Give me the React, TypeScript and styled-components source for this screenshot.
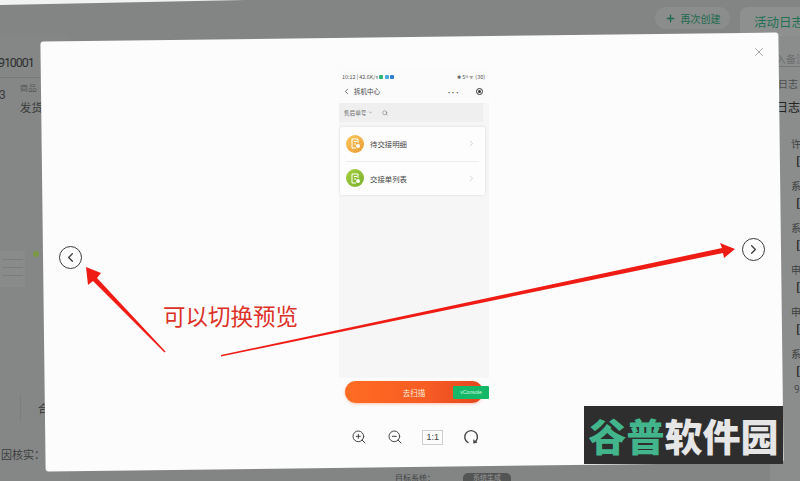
import React from "react";
import styled, { createGlobalStyle } from "styled-components";
import { ZoomIn, ZoomOut, ChevronLeft, ChevronRight, ChevronDown, Search, X, Plus } from "lucide-react";

const Global = createGlobalStyle`
  html, body { margin: 0; padding: 0; background: #838585; }
  body { font-family: "Noto Sans CJK SC", "Liberation Sans", sans-serif; }
`;

const Page = styled.div`
  position: relative; width: 800px; height: 481px; overflow: hidden;
  background: #838585; display: flex; flex-direction: column;
`;
const PaperCorner = styled.div`
  position: absolute; left: 0; top: 0; width: 245px; height: 5px;
  background: #f1f2f2; clip-path: polygon(0 0, 100% 0, 0 100%);
`;
const TopBar = styled.header`
  height: 36px; flex: none; display: flex; justify-content: flex-end; align-items: flex-start;
  gap: 10px; padding-top: 7px; box-sizing: border-box;
`;
const Pill = styled.div`
  width: 75px; height: 22px; border-radius: 11px; background: #8b8d8c; color: #1e6a4e;
  display: flex; align-items: center; justify-content: center; gap: 5px; font-size: 10px;
`;
const Tab = styled.div`
  width: 60px; height: 36px; border-radius: 8px 0 0 0; background: #8e908f; color: #1f7054;
  font-size: 12.5px; line-height: 1; padding: 9px 0 0 14px; box-sizing: border-box; white-space: nowrap; overflow: hidden;
`;
const Body = styled.main`
  flex: 1; display: flex; justify-content: space-between; min-height: 0;
`;
const LeftCol = styled.section`
  width: 70px; display: flex; flex-direction: column; background: #858787;
`;
const OrderRow = styled.div`
  height: 27px; margin-top: 15px; border-bottom: 1px solid #777a79; box-sizing: border-box;
  font: 12.5px/24px "Roboto", sans-serif; color: #2e3030; letter-spacing: -1.1px; overflow: hidden;
  text-indent: -2px;
`;
const InfoRow = styled.div`
  display: flex; gap: 14px; padding: 4px 0 0 0; height: 64px; box-sizing: border-box;
`;
const Num = styled.span` font: 12px/18px "Roboto", sans-serif; color: #3a3c3c; margin: 4px 0 0 -1px; `;
const InfoStack = styled.div` display: flex; flex-direction: column; gap: 8px; `;
const Label = styled.span` font-size: 8.5px; line-height: 10px; color: #555; white-space: nowrap; `;
const Value = styled.span` font-size: 11.5px; line-height: 14px; color: #3b3d3d; white-space: nowrap; `;
const MiniTable = styled.div`
  margin-top: 109px; width: 25px; height: 36px; background: #898a8a; position: relative;
  display: flex; flex-direction: column; gap: 7px; padding: 8px 2px; box-sizing: border-box;
`;
const MiniLine = styled.i` display: block; height: 1px; background: #7b7c7c; width: 100%; `;
const GreenDot = styled.i`
  position: absolute; left: 33px; top: 0; width: 6px; height: 6px; border-radius: 50%; background: #7a9a45;
`;
const LowerCells = styled.div`
  margin-top: 107px; height: 28px; display: flex; gap: 17px; padding-left: 3px;
  font-size: 11px; line-height: 28px; color: #333;
`;
const CellGap = styled.span` width: 17px; border-right: 1px solid #7c7e7e; `;
const Reason = styled.div`
  margin-top: 25px; font-size: 11px; line-height: 14px; color: #3c3e3e; white-space: nowrap; padding-left: 1px;
`;
const BottomStrip = styled.div`
  position: absolute; left: 395px; top: 473px; display: flex; align-items: center; gap: 28px;
  font-size: 8px; line-height: 8px; color: #444;
`;
const Chip = styled.span`
  width: 48px; height: 10px; border-radius: 5px 5px 0 0; background: #535555; color: #999; text-align: center; font-size: 7px;
`;
const RightCol = styled.aside`
  width: 30px; display: flex; flex-direction: column; color: #3d3f3f; font-size: 10px; overflow: hidden;
  background: #8b8d8d;
`;
const Note = styled.div`
  height: 31px; padding: 15px 0 0 6px; box-sizing: border-box; color: #6b6d6d; white-space: nowrap;
  border-bottom: 1px solid #777;
`;
const LogTitle = styled.div` padding: 10px 0 0 8px; color: #4b4d4d; white-space: nowrap; line-height: 14px; `;
const LogHead = styled.div` padding: 8px 0 0 6px; color: #222; font-size: 12px; line-height: 16px; white-space: nowrap; `;
const FieldList = styled.div` padding: 23px 0 0 21px; display: flex; flex-direction: column; gap: 14px; `;
const Field = styled.div` display: flex; flex-direction: column; gap: 6px; line-height: 11px; `;
const FieldValue = styled.span` padding-left: 5px; font-size: 11px; line-height: 11px; color: #222; font-weight: 700; `;
const FieldNote = styled.span` padding-left: 3px; margin-top: -5px; font: 10px/10px "Roboto", sans-serif; color: #4a4c4c; `;

const Modal = styled.div`
  position: absolute; left: 43px; top: 37px; width: 738px; height: 430px;
  display: grid; grid-template-columns: 296px 150px 1fr;
  &::before {
    content: ""; position: absolute; inset: 0; background: #fcfcfc; border-radius: 3px;
    transform: rotate(-0.7deg);
  }
`;
const Side = styled.div<{ $offset: number; $end?: boolean }>`
  position: relative; display: flex; align-items: center; height: 100%; box-sizing: border-box;
  justify-content: ${p => (p.$end ? "flex-end" : "flex-start")};
  padding: ${p => (p.$offset > 0 ? `${p.$offset}px 0 0` : `0 0 ${-p.$offset}px`)};
  padding-left: ${p => (p.$end ? 0 : 16)}px;
  padding-right: ${p => (p.$end ? 16 : 0)}px;
`;
const NavCircle = styled.button`
  width: 23px; height: 23px; border: 1.6px solid #3b3b3b; border-radius: 50%; background: transparent; padding: 0;
  display: flex; align-items: center; justify-content: center; color: #3b3b3b;
`;
const Close = styled.button`
  position: absolute; right: 15px; top: 8px; width: 14px; height: 14px; padding: 0; border: 0;
  background: transparent; color: #8c8c8c; display: flex;
`;
const PhoneCol = styled.div`
  position: relative; display: flex; flex-direction: column; align-items: stretch; padding-top: 31px;
`;
const Phone = styled.div`
  height: 310px; background: #f6f6f6; box-sizing: border-box; display: flex; flex-direction: column; color: #444;
`;
const PhoneTop = styled.div` background: #fbfbfb; height: 35px; padding: 4px 5px 0 3px; box-sizing: border-box; `;
const StatusBar = styled.div`
  display: flex; align-items: center; justify-content: space-between; height: 10px; font-size: 5.4px; color: #555; width: 143px;
`;
const StatusGroup = styled.div` display: flex; align-items: center; gap: 1.5px; `;
const Badge = styled.i<{ $c: string }>` width: 4px; height: 4px; border-radius: 1px; background: ${p => p.$c}; display: block; `;
const NavBar = styled.div`
  display: flex; align-items: center; height: 14px; margin-top: 2px; font-size: 6.5px; color: #444; width: 141px; gap: 3px;
`;
const NavSpacer = styled.span` flex: 1; `;
const Dots = styled.span` font-size: 5px; font-weight: 700; letter-spacing: -.8px; margin-right: 14px; line-height: 7px; `;
const Target = styled.i`
  width: 7px; height: 7px; border: 1px solid #333; border-radius: 50%; position: relative; display: block; box-sizing: border-box;
  &::after { content: ""; position: absolute; inset: 1px; background: #333; border-radius: 50%; }
`;
const SearchBar = styled.div`
  width: 144px; height: 19px; background: #efefef; display: flex; align-items: center; gap: 2px; padding-left: 5px;
  box-sizing: border-box; font-size: 5.6px; color: #666; flex: none; margin-bottom: 5px;
`;
const Card = styled.div`
  width: 145px; margin-left: 1px; height: 68px; background: #fdfdfd; box-shadow: 0 0 3px rgba(0,0,0,.12); border-radius: 2px;
  display: flex; flex-direction: column; padding: 0 6px; box-sizing: border-box;
`;
const MenuRow = styled.div<{ $line?: boolean }>`
  flex: 1; display: flex; align-items: center; gap: 6px; font-size: 7.4px; color: #444;
  border-bottom: ${p => (p.$line ? "1px solid #eeeeee" : "none")};
`;
const RowIcon = styled.span<{ $from: string; $to: string }>`
  width: 18px; height: 18px; border-radius: 50%; flex: none; display: flex; align-items: center; justify-content: center;
  background: linear-gradient(135deg, ${p => p.$from}, ${p => p.$to});
`;
const RowChevron = styled.span` margin-left: auto; color: #c4c4c4; display: flex; margin-right: 3px; `;
const ScanBar = styled.div`
  width: 138px; height: 22px; margin: 3px 0 0 6px; border-radius: 11px; flex: none;
  background: linear-gradient(90deg, #ff6c22, #f65c24 60%, #e6451e); box-shadow: 0 1px 3px rgba(240,90,30,.35);
  color: #ffeede; font-size: 7.5px; display: flex; align-items: center; justify-content: center;
`;
const VConsole = styled.span`
  position: absolute; left: 114px; top: 349px; width: 36px; height: 13px; background: #14b866; border-radius: 1px;
  color: #d7f7e4; font: 5.2px/13px "Liberation Sans", sans-serif; text-align: center;
`;
const Tools = styled.div`
  position: absolute; left: 12px; top: 392px; display: flex; align-items: center; color: #444; width: 128px;
  justify-content: space-between;
`;
const Ratio = styled.span`
  width: 21px; height: 15px; border: 1px solid #cfcfcf; box-sizing: border-box; font: 9px/13px "Liberation Sans", sans-serif;
  text-align: center; color: #444;
`;
const Annotation = styled.svg` position: absolute; left: 0; top: 0; width: 800px; height: 481px; pointer-events: none; `;
const Caption = styled.div`
  position: absolute; left: 163px; top: 300px; font-size: 22.5px; line-height: 30px; color: #dc3128; letter-spacing: 0;
  font-family: "Noto Sans CJK SC", sans-serif; font-weight: 400; white-space: nowrap;
`;
const Watermark = styled.div`
  position: absolute; left: 584px; top: 406px; width: 199px; height: 58px; background: #2e2e2e;
  display: flex; align-items: center; justify-content: center; font-size: 38px; font-weight: 900; line-height: 1; letter-spacing: 0;
`;
const MarkGreen = styled.span` color: #43b58c; `;
const MarkWhite = styled.span` color: #e6e6e6; `;

const DocGlyph = () => (
  <svg width="11" height="11" viewBox="0 0 11 11" fill="none" stroke="#fff" strokeWidth="1">
    <path d="M2 1h6v4M2 1v9h4M4 3.5h3M4 6h2" />
    <circle cx="8" cy="8" r="2" fill="#fff" stroke="none" />
  </svg>
);

const ResetIcon = () => (
  <svg width="16" height="16" viewBox="0 0 16 16" fill="none" stroke="#444" strokeWidth="1.4" strokeLinecap="round">
    <path d="M5 13.6A6.4 6.4 0 1 1 11.2 13.6" />
    <path d="M10.8 11.2l.4 2.4 2.4-.5" />
  </svg>
);

export default function App() {
  return (
    <Page>
      <Global />
      <PaperCorner />
      <TopBar>
        <Pill><Plus size={11} strokeWidth={3} />再次创建</Pill>
        <Tab>活动日志</Tab>
      </TopBar>
      <Body>
        <LeftCol>
          <OrderRow>910001</OrderRow>
          <InfoRow>
            <Num>3</Num>
            <InfoStack>
              <Label>商品</Label>
              <Value>发货方式</Value>
            </InfoStack>
          </InfoRow>
          <MiniTable>
            <MiniLine /><MiniLine /><MiniLine />
            <GreenDot />
          </MiniTable>
          <LowerCells><CellGap /><span>合计</span></LowerCells>
          <Reason>因核实：</Reason>
        </LeftCol>
        <RightCol>
          <Note>入备注</Note>
          <LogTitle>日志</LogTitle>
          <LogHead>日志</LogHead>
          <FieldList>
            {["许", "系", "系", "申", "申", "系"].map((t, i) => (
              <Field key={i}><span>{t}</span><FieldValue>[</FieldValue></Field>
            ))}
            <FieldNote>9</FieldNote>
          </FieldList>
        </RightCol>
      </Body>
      <BottomStrip>目标系统：<Chip>系统生成</Chip></BottomStrip>

      <Modal>
        <Side $offset={10}>
          <NavCircle><ChevronLeft size={15} strokeWidth={2} /></NavCircle>
        </Side>
        <PhoneCol>
          <Phone>
            <PhoneTop>
              <StatusBar>
                <StatusGroup>10:12 | 42.6K/s <Badge $c="#2bb673" /><Badge $c="#4aa8e0" /><Badge $c="#2f7fd0" /></StatusGroup>
                <StatusGroup>✱ 5ᴳ ᯤ (30)</StatusGroup>
              </StatusBar>
              <NavBar>
                <ChevronLeft size={9} strokeWidth={2} />拆机中心<NavSpacer /><Dots>•••</Dots><Target />
              </NavBar>
            </PhoneTop>
            <SearchBar>售后单号<ChevronDown size={5} /><Search size={6} style={{ marginLeft: 7 }} /></SearchBar>
            <Card>
              <MenuRow $line>
                <RowIcon $from="#f8c95a" $to="#eb9a34"><DocGlyph /></RowIcon>待交接明细
                <RowChevron><ChevronRight size={9} /></RowChevron>
              </MenuRow>
              <MenuRow>
                <RowIcon $from="#a9cf3f" $to="#76b02a"><DocGlyph /></RowIcon>交接单列表
                <RowChevron><ChevronRight size={9} /></RowChevron>
              </MenuRow>
            </Card>
          </Phone>
          <ScanBar>去扫描</ScanBar>
          <VConsole>vConsole</VConsole>
          <Tools>
            <ZoomIn size={16} strokeWidth={1.5} />
            <ZoomOut size={16} strokeWidth={1.5} />
            <Ratio>1:1</Ratio>
            <ResetIcon />
          </Tools>
        </PhoneCol>
        <Side $offset={-6} $end>
          <Close><X size={14} strokeWidth={1.3} /></Close>
          <NavCircle><ChevronRight size={15} strokeWidth={2} /></NavCircle>
        </Side>
      </Modal>

      <Annotation viewBox="0 0 800 481">
        <polygon fill="#ee1c14" points="165.5,351.5 164.5,352.5 93,281 88,285 86,267 101,273 97,278" />
        <polygon fill="#ee1c14" points="221,355 221,356.5 723,253 724,258 735,249 720,243 722,248" />
      </Annotation>
      <Caption>可以切换预览</Caption>
      <Watermark><MarkGreen>谷普</MarkGreen><MarkWhite>软件园</MarkWhite></Watermark>
    </Page>
  );
}
